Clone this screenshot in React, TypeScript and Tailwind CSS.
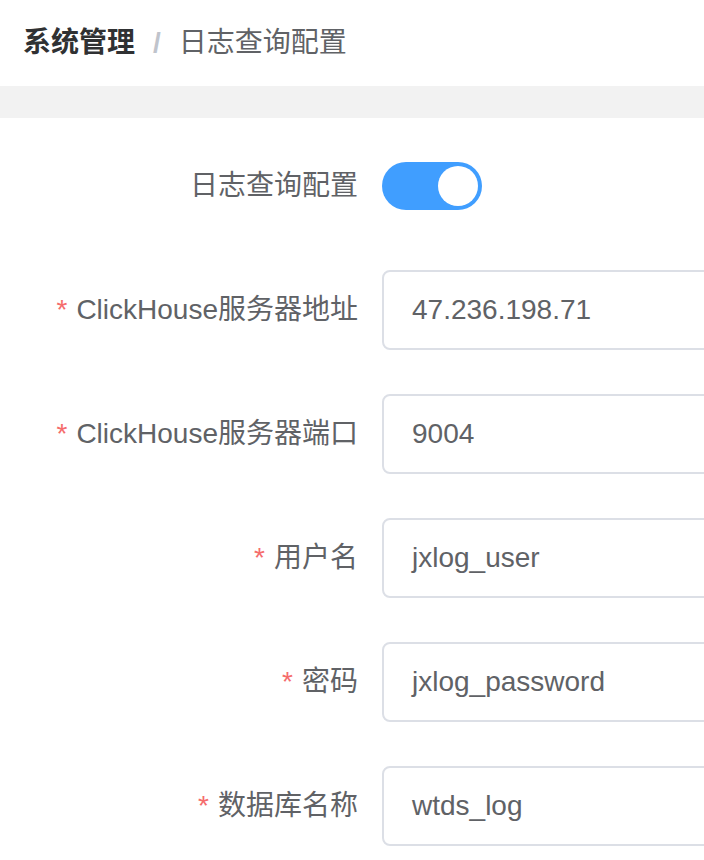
const fields = [
  { label: 'ClickHouse服务器地址', value: '47.236.198.71' },
  { label: 'ClickHouse服务器端口', value: '9004' },
  { label: '用户名', value: 'jxlog_user' },
  { label: '密码', value: 'jxlog_password' },
  { label: '数据库名称', value: 'wtds_log' },
];

function FormItem({ label, required, children }: { label: string; required?: boolean; children: React.ReactNode }) {
  return (
    <div className="flex h-[80px] mb-[44px] items-center">
      <label className="w-[382px] shrink-0 pr-[24px] text-right text-[28px] leading-[80px] text-[#606266] whitespace-nowrap">
        {required && <span className="text-[#f56c6c] mr-[9px]">*</span>}
        {label}
      </label>
      <div className="flex-1 min-w-0 flex items-center h-full">{children}</div>
    </div>
  );
}

export default function App() {
  return (
    <div className="w-[704px] h-[860px] overflow-hidden bg-white font-['Liberation_Sans','Noto_Sans_CJK_SC',sans-serif]">
      {/* breadcrumb */}
      <div className="h-[86px] flex items-center px-[23px] text-[28px]">
        <span className="font-bold text-[#303133]">系统管理</span>
        <span className="mx-[18px] font-bold text-[#c0c4cc]">/</span>
        <span className="text-[#606266]">日志查询配置</span>
      </div>
      <div className="h-[32px] bg-[#f2f2f2]" />

      <div className="pt-[28px]">
        <FormItem label="日志查询配置">
          <div className="relative w-[100px] h-[48px] rounded-full bg-[#409eff]">
            <div className="absolute right-[4px] top-[4px] w-[40px] h-[40px] rounded-full bg-white" />
          </div>
        </FormItem>
        {fields.map((f) => (
          <FormItem key={f.label} label={f.label} required>
            <div className="w-[400px] h-[80px] shrink-0 border-2 border-[#dcdfe6] rounded-[8px] px-[28px] flex items-center text-[28px] text-[#606266]">
              {f.value}
            </div>
          </FormItem>
        ))}
      </div>
    </div>
  );
}
